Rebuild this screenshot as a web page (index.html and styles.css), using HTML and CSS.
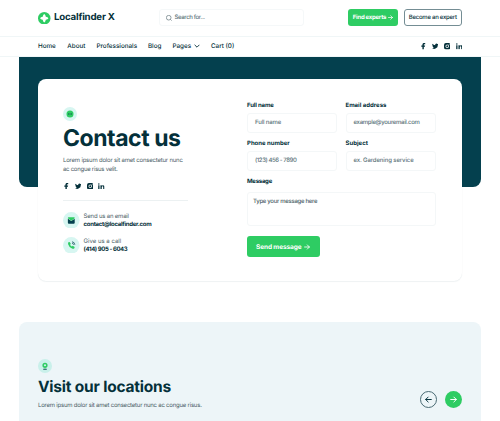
FILE: index.html
```html
<!DOCTYPE html>
<html lang="en">
<head>
<meta charset="utf-8">
<title>Localfinder X</title>
<link rel="stylesheet" href="styles.css">
</head>
<body>
<svg class="defs" aria-hidden="true">
  <symbol id="fb" viewBox="0 0 10 10"><path d="M3.700 10V5.900H2V4H3.700V2.800C3.700 1 4.800 0 6.300 0L8 .1V1.900H6.900C6.100 1.900 5.900 2.300 5.900 2.800V4H7.900L7.600 5.900H5.900V10Z"/></symbol>
  <symbol id="tw" viewBox="0 0 24 24"><path d="M24 4.600a10 10 0 0 1-2.800.8 5 5 0 0 0 2.100-2.700 10 10 0 0 1-3.100 1.200 4.900 4.900 0 0 0-8.400 4.500A14 14 0 0 1 1.700 3.200a4.900 4.900 0 0 0 1.500 6.500 5 5 0 0 1-2.200-.6 4.900 4.900 0 0 0 3.900 4.900 5 5 0 0 1-2.200.1 4.900 4.900 0 0 0 4.600 3.400A10 10 0 0 1 0 19.500a14 14 0 0 0 21.500-12.400A10 10 0 0 0 24 4.600Z"/></symbol>
  <symbol id="ig" viewBox="0 0 10 10"><path fill-rule="evenodd" d="M3 0H7Q10 0 10 3V7Q10 10 7 10H3Q0 10 0 7V3Q0 0 3 0ZM5 2.300A2.700 2.700 0 1 0 5 7.700A2.700 2.700 0 1 0 5 2.300ZM5 3.500A1.500 1.500 0 1 1 5 6.500A1.500 1.500 0 1 1 5 3.500ZM7.800 1.500A.7.7 0 1 0 7.800 2.900A.7.7 0 1 0 7.800 1.500Z"/></symbol>
  <symbol id="li" viewBox="0 0 10 10"><path d="M.3 3.500H2.300V9.700H.3ZM1.300.2A1.150 1.150 0 1 1 1.300 2.500A1.150 1.150 0 1 1 1.300.2ZM3.800 3.500H5.700V4.400C6.200 3.600 7 3.300 7.700 3.300C9.500 3.300 10 4.500 10 6.100V9.700H8V6.500C8 5.600 7.800 5 7 5C6.200 5 5.800 5.600 5.800 6.500V9.700H3.800Z"/></symbol>
  <symbol id="arrow" viewBox="0 0 10 10"><path d="M1 5H9M5.500 1.500L9 5L5.500 8.500" fill="none" stroke="currentColor" stroke-width="1.400" stroke-linecap="round" stroke-linejoin="round"/></symbol>
</svg>

<header class="top">
  <a class="logo">
    <svg viewBox="0 0 24 24"><circle cx="12" cy="12" r="12" fill="#2ecc63"/><path d="M12 4Q14.300 5 15 9Q19 9.700 20 12Q19 14.300 15 15Q14.300 19 12 20Q9.700 19 9 15Q5 14.300 4 12Q5 9.700 9 9Q9.700 5 12 4Z" fill="#fff"/></svg>
    <span>Localfinder X</span>
  </a>
  <div class="search">
    <svg viewBox="0 0 10 10"><path d="M7.300 7.300L9.400 9.400M8.400 4.500A3.900 3.900 0 1 1 .6 4.500A3.900 3.900 0 1 1 8.400 4.500Z" fill="none" stroke="currentColor"/></svg>
    <span>Search for...</span>
  </div>
  <div class="actions">
    <a class="btn find"><span>Find experts</span><svg><use href="#arrow"/></svg></a>
    <a class="btn become"><span>Become an expert</span></a>
  </div>
</header>

<nav class="nav">
  <a class="n-home">Home</a><a class="n-about">About</a><a class="n-pro">Professionals</a><a class="n-blog">Blog</a>
  <a class="n-pages">Pages <svg viewBox="0 0 10 6"><path d="M1 1L5 5L9 1" fill="none" stroke="currentColor" stroke-width="1.500"/></svg></a>
  <a class="n-cart">Cart (0)</a>
  <div class="social"><svg><use href="#fb"/></svg><svg><use href="#tw"/></svg><svg><use href="#ig"/></svg><svg><use href="#li"/></svg></div>
</nav>

<main>
  <section class="hero">
    <div class="card">
      <div class="info">
        <svg class="badge" viewBox="0 0 28 28"><circle cx="14" cy="14" r="14" fill="#d7f6f1"/><circle cx="14" cy="14" r="7" fill="#2ecc63"/><path d="M10 14H12M13 14H15M16 14H18" stroke="#04404e" stroke-width="1.700"/></svg>
        <h1>Contact us</h1>
        <p class="lead"><span class="lead-a">Lorem ipsum dolor sit amet consectetur nunc</span><br><span class="lead-b">ac congue risus velit.</span></p>
        <div class="social"><svg><use href="#fb"/></svg><svg><use href="#tw"/></svg><svg><use href="#ig"/></svg><svg><use href="#li"/></svg></div>
        <hr>
        <div class="contact">
          <svg viewBox="0 0 34 34"><circle cx="17" cy="17" r="17" fill="#d7f6f1"/><path d="M10 14L17 18.500L24 14V22Q24 24 22 24H12Q10 24 10 22Z" fill="#04404e"/><path d="M11 11H23Q24 11 24 13L17 18L10 13Q10 11 11 11Z" fill="#2ecc63"/></svg>
          <div><span class="c-mail">Send us an email</span><b class="c-addr">contact@localfinder.com</b></div>
        </div>
        <div class="contact">
          <svg viewBox="0 0 34 34"><circle cx="17" cy="17" r="17" fill="#d7f6f1"/><path d="M11 11L13.500 10L16 14L14.500 16Q15.500 18.500 18 19.500L20 18L24 20.500L23 23.500Q21 24.500 18.500 23.500Q12 21 10.500 15Q10 12.500 11 11Z" fill="#2ecc63"/><path d="M18.500 12.500Q21.500 13 21.500 16M18.500 9.700Q24 10.500 24.300 16" fill="none" stroke="#04404e" stroke-width="1.400"/></svg>
          <div><span class="c-call">Give us a call</span><b class="c-num">(414) 905 - 6043</b></div>
        </div>
      </div>
      <form class="form">
        <label class="field"><b class="f-name">Full name</b><span class="box p-name"><i>Full name</i></span></label>
        <label class="field"><b class="f-mail">Email address</b><span class="box p-mail"><i>example@youremail.com</i></span></label>
        <label class="field"><b class="f-phone">Phone number</b><span class="box p-phone"><i>(123) 456 - 7890</i></span></label>
        <label class="field"><b class="f-subj">Subject</b><span class="box p-subj"><i>ex. Gardening service</i></span></label>
        <label class="field wide"><b class="f-msg">Message</b><span class="box area"><i>Type your message here</i></span></label>
        <a class="send"><span>Send message</span><svg><use href="#arrow"/></svg></a>
      </form>
    </div>
  </section>

  <section class="locations">
    <div>
      <svg class="badge" viewBox="0 0 28 28"><circle cx="14" cy="14" r="14" fill="#c9f0ea"/><path d="M10.500 20.500H17.500" stroke="#04404e" stroke-width="1.800"/><path d="M14 19V16" stroke="#2ecc63" stroke-width="2"/><circle cx="14" cy="12.500" r="3.700" fill="none" stroke="#2ecc63" stroke-width="3"/></svg>
      <h2>Visit our locations</h2>
      <p>Lorem ipsum dolor sit amet consectetur nunc ac congue risus.</p>
    </div>
    <div class="arrows">
      <a class="round prev"><svg><use href="#arrow"/></svg></a>
      <a class="round next"><svg><use href="#arrow"/></svg></a>
    </div>
  </section>
</main>
</body>
</html>
```

FILE: styles.css
```css
* { box-sizing: border-box; }
body {
  margin: 0;
  width: 500px;
  height: 421px;
  overflow: hidden;
  background: #fff;
  color: #04303a;
  font: 500 6px/8px Inter, sans-serif;
  text-rendering: geometricPrecision;
  white-space: nowrap;
}
.defs { display: none; }
svg { display: block; flex: none; fill: currentColor; }
h1, h2, p { margin: 0; }
i { font-style: normal; }

.top {
  height: 36.500px;
  display: flex;
  align-items: center;
  padding: 0 38px;
  border-bottom: 1px solid #f0f6f7;
}
.logo { display: flex; align-items: center; gap: 3.500px; width: 121px; font-size: 9.700px; font-weight: 700; letter-spacing: -.2px; }
.logo svg { width: 12.500px; height: 12.500px; }
.search {
  display: flex; align-items: center; gap: 2.500px;
  width: 145px; height: 17px; padding-left: 6px;
  border: 1px solid #f5f8f9; border-radius: 3px;
  color: #5c737a;
  letter-spacing: -.35px;
}
.search svg { width: 6px; height: 6px; color: #4c6168; }
.actions { display: flex; gap: 5.500px; margin-left: auto; }
.btn {
  display: flex; align-items: center; justify-content: center; gap: 2px;
  height: 17px; border-radius: 3px;
  letter-spacing: -.26px;
}
.btn svg { width: 5px; height: 5px; }
.find { width: 50px; background: #2ecc63; color: #fff; font-weight: 700; }
.become { width: 58.500px; border: 1px solid #748d94; }

.nav {
  height: 20.500px;
  display: flex; align-items: center;
  padding: 0 38px;
  border-bottom: 1px solid #f0f6f7;
  font-size: 6.300px;
}
.nav a { flex: none; }
.n-home { width: 29.300px; }
.n-about { width: 29.200px; }
.n-pro { width: 51.500px; }
.n-blog { width: 24.500px; }
.nav .n-pages { width: 38.500px; display: flex; align-items: center; gap: 3px; }
.n-pages svg { width: 6px; height: 4px; }
.nav .social { margin-left: auto; }
.social { display: flex; gap: 5.300px; }
.social svg { width: 6.500px; height: 6.500px; }

.hero {
  height: 130px;
  margin: 0 19px;
  padding: 22px 19px 0;
  background: #04404e;
  border-radius: 0 0 8px 8px;
}
.card {
  height: 202px;
  display: flex;
  padding: 0 25px;
  background: #fff;
  border-radius: 8px;
  box-shadow: 0 1px 1px rgba(4, 64, 78, .06), 0 0 1px rgba(4, 64, 78, .08);
}
.info { width: 184px; padding-top: 27.500px; }
.badge { width: 14px; height: 14px; }
h1 { margin-top: 2px; font-size: 23px; line-height: 30px; font-weight: 700; letter-spacing: -.45px; }
.lead { margin-top: 3px; line-height: 9px; font-weight: 400; color: #4c6168; }
.lead-a { letter-spacing: -.2px; }
.lead-b { letter-spacing: -.26px; }
.info .social { margin-top: 9px; }
hr { width: 124.500px; height: 1px; margin: 10.500px 0 11px; border: 0; background: #ecf1f2; }
.contact { display: flex; align-items: center; gap: 4px; height: 17px; margin-bottom: 8px; }
.contact svg { width: 16.600px; height: 16.600px; }
.contact div { padding-top: 1px; }
.contact span, .contact b { display: block; width: max-content; }
.contact span { color: #4c6168; font-weight: 400; }
b { font-weight: 700; }
.c-mail { letter-spacing: -.19px; }
.c-addr { letter-spacing: -.29px; }
.c-num { letter-spacing: -.38px; }

.form {
  display: grid;
  grid-template-columns: 90px 90px;
  grid-template-rows: 38.500px 38.300px 58px auto;
  column-gap: 8.500px;
  padding-top: 22.500px;
  align-content: start;
}
.field b { display: block; width: max-content; }
.f-name { letter-spacing: -.15px; }
.f-msg { letter-spacing: -.25px; }
.box {
  display: flex; align-items: center;
  height: 20px; margin-top: 3px; padding-left: 7px;
  border: 1px solid #f4f7f8; border-radius: 3px;
  color: #5c737a;
}
.p-name { letter-spacing: -.15px; }
.p-mail { letter-spacing: -.3px; }
.p-phone { letter-spacing: -.42px; }
.p-subj { letter-spacing: -.12px; }
.wide { grid-column: 1 / 3; }
.area { height: 34px; margin-top: 6px; padding: 5px 0 0 5px; align-items: flex-start; letter-spacing: -.3px; color: #4c6168; }
.send {
  display: flex; align-items: center; justify-content: center; gap: 3px;
  width: 72.500px; height: 21px;
  border-radius: 3px;
  background: #2ecc63; color: #fff;
  font-size: 6.500px; font-weight: 700;
  letter-spacing: -.1px;
}
.send svg { width: 6px; height: 6px; }

.locations {
  display: flex; justify-content: space-between;
  height: 110px;
  margin: 135px 19px 0;
  padding: 36.500px 19px 0;
  background: #edf5f8;
  border-radius: 8px 8px 0 0;
}
h2 { margin-top: 4.500px; font-size: 15.500px; line-height: 20px; font-weight: 700; letter-spacing: -.2px; }
.locations p { margin-top: 4.500px; font-weight: 400; color: #4c6168; letter-spacing: -.22px; }
.arrows { display: flex; gap: 8px; padding-top: 32px; }
.round { display: grid; place-items: center; width: 17px; height: 17px; border-radius: 50%; }
.round svg { width: 7px; height: 7px; }
.prev { border: 1px solid #4a6b74; }
.prev svg { transform: scaleX(-1); }
.next { background: #2ecc63; color: #fff; }
```
